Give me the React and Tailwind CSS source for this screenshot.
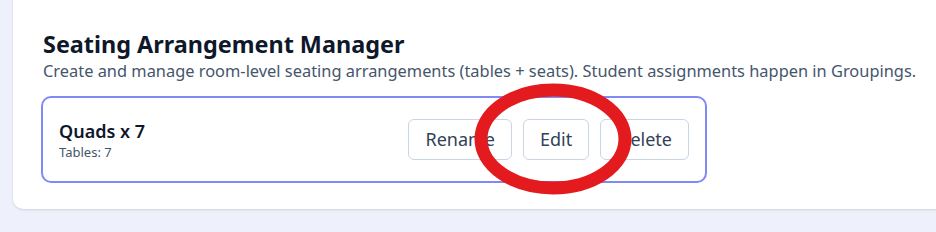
import React from "react";

const arrangements = [{ id: 1, name: "Quads x 7", tables: 7 }];

const ActionButton = ({ children }) => (
  <button className="h-[41px] px-[16px] rounded-md border border-slate-300 bg-white text-[18px] text-slate-700">
    {children}
  </button>
);

export default function App() {
  return (
    <div
      className="relative h-[232px] w-[936px] overflow-hidden bg-[#eef1fc]"
      style={{ fontFamily: '"Segoe UI", "Noto Sans", sans-serif' }}
    >
      {/* Tarjeta principal */}
      <div className="ml-[13px] mt-[-20px] h-[229px] w-[940px] rounded-[10px] bg-white px-[28px] pt-[48px] shadow-sm">
        <h2 className="pl-[2px] text-[23.4px] font-bold leading-[32px] text-slate-900">
          Seating Arrangement Manager
        </h2>
        <p className="mt-[-1px] pl-[2px] text-[16.4px] leading-[24px] text-slate-600">
          Create and manage room-level seating arrangements (tables + seats). Student assignments happen in Groupings.
        </p>

        {/* Lista de arreglos */}
        {arrangements.map((a) => (
          <div
            key={a.id}
            className="mt-[13px] flex h-[87px] w-[666px] items-center justify-between rounded-[10px] border-2 border-[#8089f5] pl-[16px] pr-[16px]"
          >
            <div>
              <div className="text-[18px] font-semibold leading-[24px] text-slate-900">{a.name}</div>
              <div className="text-[13px] leading-[18px] text-slate-600">Tables: {a.tables}</div>
            </div>
            <div className="flex gap-[11px]">
              <ActionButton>Rename</ActionButton>
              <ActionButton>Edit</ActionButton>
              <ActionButton>Delete</ActionButton>
            </div>
          </div>
        ))}
      </div>

      {/* Marca roja de anotación */}
      <svg className="pointer-events-none absolute left-0 top-0" width="936" height="232">
        <ellipse cx="553" cy="139" rx="72" ry="49" fill="none" stroke="#e31b1e" strokeWidth="13" />
      </svg>
    </div>
  );
}
